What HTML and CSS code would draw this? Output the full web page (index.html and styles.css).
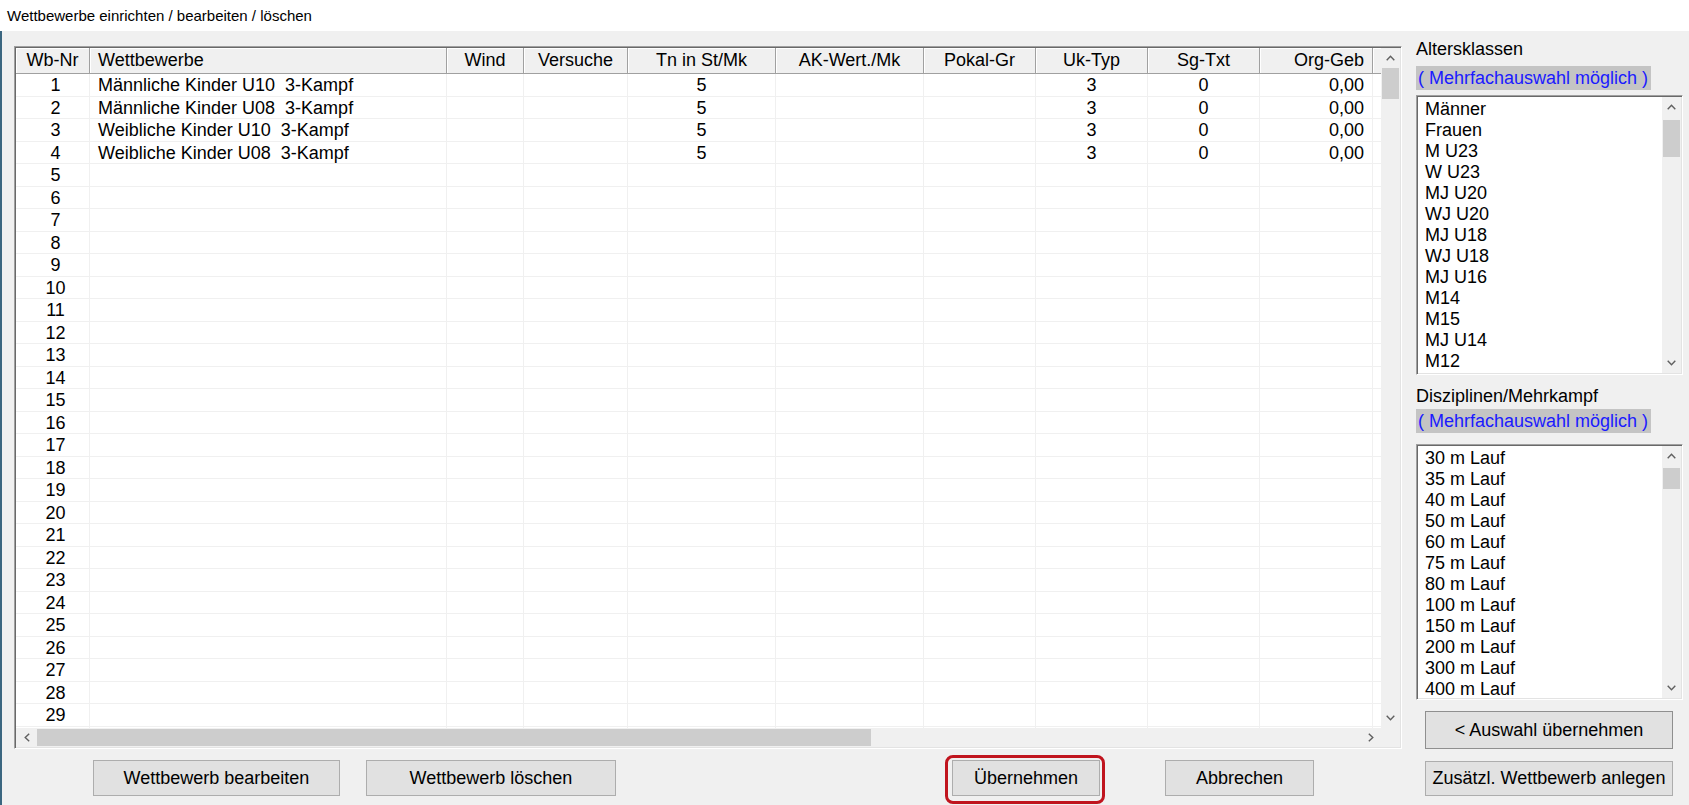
FILE: index.html
```html
<!DOCTYPE html>
<html lang="de">
<head>
    <meta charset="UTF-8">
    <title>Wettbewerbe einrichten / bearbeiten / löschen</title>
    <link rel="stylesheet" href="styles.css">
</head>
<body>
    <div class="titlebar">Wettbewerbe einrichten / bearbeiten / löschen</div>

    <div class="main">
        <div class="left">
            <div class="frame">
                <div class="view">
                    <div class="head">
                        <span>Wb-Nr</span><span>Wettbewerbe</span><span>Wind</span><span>Versuche</span><span>Tn in St/Mk</span><span>AK-Wert./Mk</span><span>Pokal-Gr</span><span>Uk-Typ</span><span>Sg-Txt</span><span>Org-Geb</span><span></span>
                    </div>
                    <div class="row"><span>1</span><span>Männliche Kinder U10  3-Kampf</span><span></span><span></span><span>5</span><span></span><span></span><span>3</span><span>0</span><span>0,00</span><span></span></div>
                    <div class="row"><span>2</span><span>Männliche Kinder U08  3-Kampf</span><span></span><span></span><span>5</span><span></span><span></span><span>3</span><span>0</span><span>0,00</span><span></span></div>
                    <div class="row"><span>3</span><span>Weibliche Kinder U10  3-Kampf</span><span></span><span></span><span>5</span><span></span><span></span><span>3</span><span>0</span><span>0,00</span><span></span></div>
                    <div class="row"><span>4</span><span>Weibliche Kinder U08  3-Kampf</span><span></span><span></span><span>5</span><span></span><span></span><span>3</span><span>0</span><span>0,00</span><span></span></div>
                    <div class="row"><span>5</span><span></span><span></span><span></span><span></span><span></span><span></span><span></span><span></span><span></span><span></span></div>
                    <div class="row"><span>6</span><span></span><span></span><span></span><span></span><span></span><span></span><span></span><span></span><span></span><span></span></div>
                    <div class="row"><span>7</span><span></span><span></span><span></span><span></span><span></span><span></span><span></span><span></span><span></span><span></span></div>
                    <div class="row"><span>8</span><span></span><span></span><span></span><span></span><span></span><span></span><span></span><span></span><span></span><span></span></div>
                    <div class="row"><span>9</span><span></span><span></span><span></span><span></span><span></span><span></span><span></span><span></span><span></span><span></span></div>
                    <div class="row"><span>10</span><span></span><span></span><span></span><span></span><span></span><span></span><span></span><span></span><span></span><span></span></div>
                    <div class="row"><span>11</span><span></span><span></span><span></span><span></span><span></span><span></span><span></span><span></span><span></span><span></span></div>
                    <div class="row"><span>12</span><span></span><span></span><span></span><span></span><span></span><span></span><span></span><span></span><span></span><span></span></div>
                    <div class="row"><span>13</span><span></span><span></span><span></span><span></span><span></span><span></span><span></span><span></span><span></span><span></span></div>
                    <div class="row"><span>14</span><span></span><span></span><span></span><span></span><span></span><span></span><span></span><span></span><span></span><span></span></div>
                    <div class="row"><span>15</span><span></span><span></span><span></span><span></span><span></span><span></span><span></span><span></span><span></span><span></span></div>
                    <div class="row"><span>16</span><span></span><span></span><span></span><span></span><span></span><span></span><span></span><span></span><span></span><span></span></div>
                    <div class="row"><span>17</span><span></span><span></span><span></span><span></span><span></span><span></span><span></span><span></span><span></span><span></span></div>
                    <div class="row"><span>18</span><span></span><span></span><span></span><span></span><span></span><span></span><span></span><span></span><span></span><span></span></div>
                    <div class="row"><span>19</span><span></span><span></span><span></span><span></span><span></span><span></span><span></span><span></span><span></span><span></span></div>
                    <div class="row"><span>20</span><span></span><span></span><span></span><span></span><span></span><span></span><span></span><span></span><span></span><span></span></div>
                    <div class="row"><span>21</span><span></span><span></span><span></span><span></span><span></span><span></span><span></span><span></span><span></span><span></span></div>
                    <div class="row"><span>22</span><span></span><span></span><span></span><span></span><span></span><span></span><span></span><span></span><span></span><span></span></div>
                    <div class="row"><span>23</span><span></span><span></span><span></span><span></span><span></span><span></span><span></span><span></span><span></span><span></span></div>
                    <div class="row"><span>24</span><span></span><span></span><span></span><span></span><span></span><span></span><span></span><span></span><span></span><span></span></div>
                    <div class="row"><span>25</span><span></span><span></span><span></span><span></span><span></span><span></span><span></span><span></span><span></span><span></span></div>
                    <div class="row"><span>26</span><span></span><span></span><span></span><span></span><span></span><span></span><span></span><span></span><span></span><span></span></div>
                    <div class="row"><span>27</span><span></span><span></span><span></span><span></span><span></span><span></span><span></span><span></span><span></span><span></span></div>
                    <div class="row"><span>28</span><span></span><span></span><span></span><span></span><span></span><span></span><span></span><span></span><span></span><span></span></div>
                    <div class="row"><span>29</span><span></span><span></span><span></span><span></span><span></span><span></span><span></span><span></span><span></span><span></span></div>
                    <div class="row"><span></span><span></span><span></span><span></span><span></span><span></span><span></span><span></span><span></span><span></span><span></span></div>
                </div>

                <div class="vscroll">
                    <div class="arrow"><svg width="9" height="6" viewBox="0 0 9 6"><polyline points="0.7,5.2 4.5,1.2 8.3,5.2" fill="none" stroke="#606060" stroke-width="1.4"/></svg></div>
                    <div class="track"><div class="thumb thumb-grid"></div></div>
                    <div class="arrow"><svg width="9" height="6" viewBox="0 0 9 6"><polyline points="0.7,0.8 4.5,4.8 8.3,0.8" fill="none" stroke="#606060" stroke-width="1.4"/></svg></div>
                </div>

                <div class="hscroll">
                    <div class="arrow"><svg width="6" height="9" viewBox="0 0 6 9"><polyline points="5.2,0.7 1.2,4.5 5.2,8.3" fill="none" stroke="#606060" stroke-width="1.4"/></svg></div>
                    <div class="track"><div class="hthumb"></div></div>
                    <div class="arrow"><svg width="6" height="9" viewBox="0 0 6 9"><polyline points="0.8,0.7 4.8,4.5 0.8,8.3" fill="none" stroke="#606060" stroke-width="1.4"/></svg></div>
                </div>
                <div class="corner"></div>
            </div>

            <div class="actions">
                <button class="btn btn-edit">Wettbewerb bearbeiten</button>
                <button class="btn btn-delete">Wettbewerb löschen</button>
                <button class="btn btn-ok">Übernehmen</button>
                <button class="btn btn-cancel">Abbrechen</button>
            </div>
        </div>

        <div class="side">
            <div class="caption">Altersklassen</div>
            <div class="hint">( Mehrfachauswahl möglich )</div>
            <div class="listbox lb-classes">
                <ul>
                    <li>Männer</li>
                    <li>Frauen</li>
                    <li>M U23</li>
                    <li>W U23</li>
                    <li>MJ U20</li>
                    <li>WJ U20</li>
                    <li>MJ U18</li>
                    <li>WJ U18</li>
                    <li>MJ U16</li>
                    <li>M14</li>
                    <li>M15</li>
                    <li>MJ U14</li>
                    <li>M12</li>
                </ul>
                <div class="vscroll">
                    <div class="arrow"><svg width="9" height="6" viewBox="0 0 9 6"><polyline points="0.7,5.2 4.5,1.2 8.3,5.2" fill="none" stroke="#606060" stroke-width="1.4"/></svg></div>
                    <div class="track"><div class="thumb thumb-list"></div></div>
                    <div class="arrow"><svg width="9" height="6" viewBox="0 0 9 6"><polyline points="0.7,0.8 4.5,4.8 8.3,0.8" fill="none" stroke="#606060" stroke-width="1.4"/></svg></div>
                </div>
            </div>

            <div class="caption caption-second">Disziplinen/Mehrkampf</div>
            <div class="hint hint-second">( Mehrfachauswahl möglich )</div>
            <div class="listbox lb-disc">
                <ul>
                    <li>30 m Lauf</li>
                    <li>35 m Lauf</li>
                    <li>40 m Lauf</li>
                    <li>50 m Lauf</li>
                    <li>60 m Lauf</li>
                    <li>75 m Lauf</li>
                    <li>80 m Lauf</li>
                    <li>100 m Lauf</li>
                    <li>150 m Lauf</li>
                    <li>200 m Lauf</li>
                    <li>300 m Lauf</li>
                    <li>400 m Lauf</li>
                </ul>
                <div class="vscroll">
                    <div class="arrow"><svg width="9" height="6" viewBox="0 0 9 6"><polyline points="0.7,5.2 4.5,1.2 8.3,5.2" fill="none" stroke="#606060" stroke-width="1.4"/></svg></div>
                    <div class="track"><div class="thumb thumb-disc"></div></div>
                    <div class="arrow"><svg width="9" height="6" viewBox="0 0 9 6"><polyline points="0.7,0.8 4.5,4.8 8.3,0.8" fill="none" stroke="#606060" stroke-width="1.4"/></svg></div>
                </div>
            </div>

            <button class="btn btn-take">&lt; Auswahl übernehmen</button>
            <button class="btn btn-add">Zusätzl. Wettbewerb anlegen</button>
        </div>
    </div>
</body>
</html>
```

FILE: styles.css
```css
* {
    box-sizing: border-box;
}
body {
    margin: 0;
    width: 1689px;
    height: 805px;
    overflow: hidden;
    background-color: #f0f0f0;
    font-family: "Liberation Sans", Arial, sans-serif;
    font-size: 18px;
    color: #000;
}
.titlebar {
    height: 31px;
    line-height: 31px;
    padding-left: 7px;
    background-color: #fff;
    font-size: 15px;
}
.main {
    display: flex;
    gap: 14px;
    height: 774px;
    padding: 8px 0 0 12px;
    border-left: 2px solid #3b6680;
}

/* grid */
.left {
    width: 1388px;
    margin-top: 7px;
}
.frame {
    display: grid;
    grid-template-columns: 1365px 19px;
    grid-template-rows: 680px 19px;
    height: 703px;
    border: 1px solid;
    border-color: #a0a0a0 #fff #fff #a0a0a0;
    box-shadow: inset 1px 1px 0 #696969, inset -1px -1px 0 #e3e3e3;
    padding: 1px;
}
.view {
    overflow: hidden;
    background-color: #fff;
}
.head,
.row {
    display: grid;
    grid-template-columns: 74px 357px 77px 104px 148px 148px 112px 112px 112px 113px 40px;
    width: 1397px;
}
.head {
    height: 26px;
    line-height: 25px;
    background-color: #f0f0f0;
}
.head span {
    border-right: 1px solid #a0a0a0;
    border-bottom: 1px solid #a0a0a0;
    box-shadow: inset 1px 1px 0 #fff;
    text-align: center;
    white-space: nowrap;
    overflow: hidden;
}
.head span:nth-child(2) {
    text-align: left;
    padding-left: 8px;
}
.head span:nth-child(10) {
    text-align: right;
    padding-right: 8px;
}
.row {
    height: 22.5px;
    line-height: 22px;
}
.row span {
    border-right: 1px solid #f0f0f0;
    border-bottom: 1px solid #f0f0f0;
    text-align: center;
    white-space: pre;
    overflow: hidden;
}
.row span:nth-child(1) {
    padding-left: 6px;
}
.row span:nth-child(2) {
    text-align: left;
    padding-left: 8px;
}
.row span:nth-child(10) {
    text-align: right;
    padding-right: 8px;
}

/* scrollbars */
.vscroll {
    display: flex;
    flex-direction: column;
    width: 19px;
    background-color: #f0f0f0;
}
.vscroll .arrow {
    height: 20px;
}
.arrow {
    display: flex;
    align-items: center;
    justify-content: center;
    flex: none;
}
.track {
    flex: 1;
}
.thumb {
    margin: 0 1px;
    background-color: #cdcdcd;
}
.thumb-grid {
    height: 31px;
}
.thumb-list {
    margin-top: 3px;
    height: 37px;
}
.thumb-disc {
    margin-top: 2px;
    height: 21px;
}
.hscroll {
    display: flex;
    background-color: #f0f0f0;
}
.hscroll .arrow {
    width: 21px;
}
.hthumb {
    width: 834px;
    height: 17px;
    margin-top: 1px;
    background-color: #cdcdcd;
}
.corner {
    background-color: #f0f0f0;
}

/* buttons */
.btn {
    display: block;
    padding: 0;
    background-color: #e1e1e1;
    border: 1px solid #adadad;
    font-family: "Liberation Sans", Arial, sans-serif;
    font-size: 18px;
    color: #000;
}
.actions {
    display: flex;
    margin-top: 11px;
}
.actions .btn {
    height: 36px;
}
.btn-edit {
    margin-left: 79px;
    width: 247px;
}
.btn-delete {
    margin-left: 26px;
    width: 250px;
}
.btn-ok {
    position: relative;
    margin-left: 336px;
    width: 148px;
}
.btn-ok::after {
    content: "";
    position: absolute;
    top: -6px;
    left: -8px;
    right: -6px;
    bottom: -9px;
    border: 3px solid #c0141e;
    border-radius: 8px;
}
.btn-cancel {
    margin-left: 65px;
    width: 149px;
}

/* right side */
.side {
    width: 267px;
}
.caption {
    height: 21px;
    line-height: 21px;
    white-space: nowrap;
}
.caption-second {
    margin-top: 11px;
}
.hint {
    display: inline-block;
    margin-top: 6px;
    height: 24px;
    line-height: 24px;
    padding: 0 3px 0 2px;
    background-color: #c4c4c4;
    color: #1a1aff;
    white-space: nowrap;
}
.hint-second {
    margin-top: 2px;
}
.listbox {
    display: flex;
    margin-top: 5px;
    background-color: #fff;
    border: 1px solid;
    border-color: #a0a0a0 #fff #fff #a0a0a0;
    box-shadow: inset 1px 1px 0 #696969, inset -1px -1px 0 #e3e3e3;
    padding: 1px;
}
.lb-classes {
    height: 280px;
}
.lb-disc {
    margin-top: 11px;
    height: 256px;
}
.listbox ul {
    flex: 1;
    margin: 0;
    padding: 2px 0 0 7px;
    list-style: none;
    overflow: hidden;
}
.listbox li {
    height: 21px;
    line-height: 21px;
    white-space: nowrap;
}
.listbox .vscroll {
    flex: none;
}
.btn-take {
    margin: 11px 0 0 9px;
    width: 248px;
    height: 38px;
    border-color: #8f8f8f;
}
.btn-add {
    margin: 12px 0 0 9px;
    width: 248px;
    height: 35px;
}
```
